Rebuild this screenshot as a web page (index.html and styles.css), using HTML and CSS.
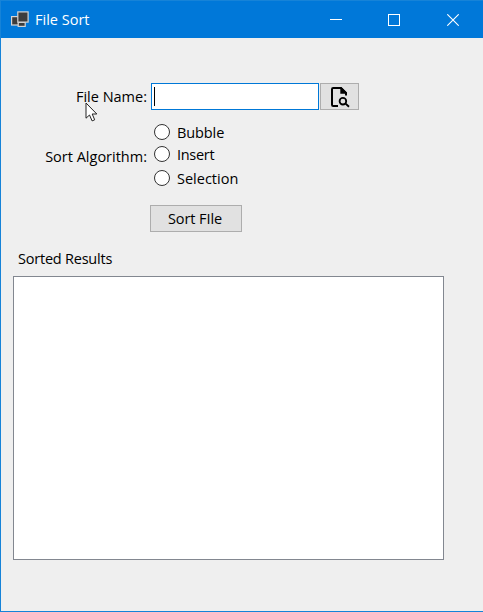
FILE: index.html
```
<!DOCTYPE html>
<html lang="en">
<head>
<meta charset="utf-8">
<title>File Sort</title>
<link rel="stylesheet" href="styles.css">
</head>
<body>
<div class="window">
  <header class="titlebar">
    <svg class="app-icon" width="18" height="17" viewBox="0 0 18 17">
      <g fill="#3c3c3c" stroke="#d4d4d4" stroke-width="1.2">
        <rect x=".6" y="5.6" width="7" height="8.4"/>
        <rect x="7.2" y="11.4" width="7" height="4"/>
        <rect x="6.8" y=".9" width="10.3" height="10.2"/>
      </g>
    </svg>
    <span class="title">File Sort</span>
    <div class="controls">
      <span><svg width="12" height="12"><path d="M0 5.5H12" stroke="#fff"/></svg></span>
      <span><svg width="12" height="12"><rect x=".5" y=".5" width="11" height="11" fill="none" stroke="#fff"/></svg></span>
      <span><svg width="12" height="12"><path d="M.3.3 11.7 11.7M11.7.3.3 11.7" stroke="#fff" stroke-width="1.1"/></svg></span>
    </div>
  </header>
  <main class="form">
    <div class="row file-row">
      <span class="label"><span class="t-file">File Name:</span></span>
      <div class="file-input"><i class="caret"></i></div>
      <div class="button browse">
        <svg width="20" height="22" viewBox="0 0 20 22">
          <path d="M8 20H3.2Q2 20 2 18.8V3.2Q2 2 3.2 2H11L16 7V9.5" fill="none" stroke="#000" stroke-width="2"/>
          <path d="M10.3 1.2V7.8H17V6.7L11.5 1.2Z"/>
          <circle cx="12.9" cy="15.2" r="3.3" fill="none" stroke="#000" stroke-width="1.8"/>
          <path d="M15.3 17.4 19 20.7" stroke="#000" stroke-width="1.9"/>
        </svg>
      </div>
    </div>
    <div class="row algorithm-row">
      <span class="label"><span class="t-algo">Sort Algorithm:</span></span>
      <div class="radios">
        <label class="radio"><i></i><span class="t-bubble">Bubble</span></label>
        <label class="radio"><i></i><span class="t-insert">Insert</span></label>
        <label class="radio"><i></i><span class="t-selection">Selection</span></label>
      </div>
    </div>
    <div class="button sort"><span class="t-sort">Sort FIle</span></div>
    <div class="results-label"><span class="t-results">Sorted Results</span></div>
    <div class="results"></div>
  </main>
  <svg class="cursor" width="13" height="21" viewBox="0 0 13 21">
    <path d="M1 1V16.2L4.5 13 7.1 18.9 9.7 17.8 7.2 12H11.8Z" fill="#fff" stroke="#222"/>
  </svg>
</div>
</body>
</html>
```
FILE: styles.css
```
* { box-sizing: border-box; }
body {
  margin: 0;
  font: 14.5px/20px "Open Sans", "Noto Sans", sans-serif;
  color: #000;
}
svg { display: block; }
.window {
  position: relative;
  height: 612px;
  background: #efefef;
  border: 1px solid #1683d8;
  border-right: 0;
  overflow: hidden;
}
.titlebar {
  display: flex;
  align-items: center;
  height: 37px;
  margin-left: -1px;
  padding-left: 11px;
  background: #0078d9;
  color: #fff;
}
.app-icon { margin-right: 6px; }
.controls { display: flex; margin-left: auto; padding-right: 1px; }
.controls span { width: 58px; display: flex; justify-content: center; }
.controls span:nth-child(-n+2) { padding-right: 2px; }
.form { padding: 45px 0 0 12px; }
.row { display: flex; }
.label { width: 134px; text-align: right; white-space: nowrap; }
.file-row { height: 27px; align-items: center; }
.file-input {
  width: 168px;
  height: 27px;
  margin-left: 4px;
  padding: 3px 2px;
  background: #fff;
  border: 1px solid #0078d7;
}
.caret { display: block; width: 1px; height: 19px; background: #000; }
.button {
  display: flex;
  align-items: center;
  justify-content: center;
  height: 27px;
  background: #e1e1e1;
  border: 1px solid #adadad;
}
.browse { width: 39px; margin-left: 1px; padding-top: 1px; }
.algorithm-row { height: 70px; margin-top: 12px; }
.algorithm-row .label { padding-top: 25px; }
.radios {
  display: grid;
  grid-template-rows: 20px 20px 20px;
  row-gap: 3px;
  margin-left: 7px;
}
.radio { display: flex; align-items: center; gap: 7px; }
.radio:nth-child(2) { position: relative; top: -1px; }
.radio i {
  width: 16px;
  height: 16px;
  border: 1px solid #333;
  border-radius: 50%;
  background: #fff;
}
.radio span { padding-top: 1px; }
.sort { width: 92px; margin: 13px 0 0 137px; padding-right: 2px; }
.results-label { margin: 17px 0 0 5px; height: 20px; }
.results {
  width: 431px;
  height: 284px;
  margin-top: 7px;
  background: #fff;
  border: 1px solid #828790;
}
.t-insert { letter-spacing: -0.3px; }
.t-bubble { letter-spacing: -0.1px; }
.t-results { letter-spacing: -0.22px; }
.t-sort { letter-spacing: -0.08px; }
.cursor { position: absolute; left: 84px; top: 101px; }
```
